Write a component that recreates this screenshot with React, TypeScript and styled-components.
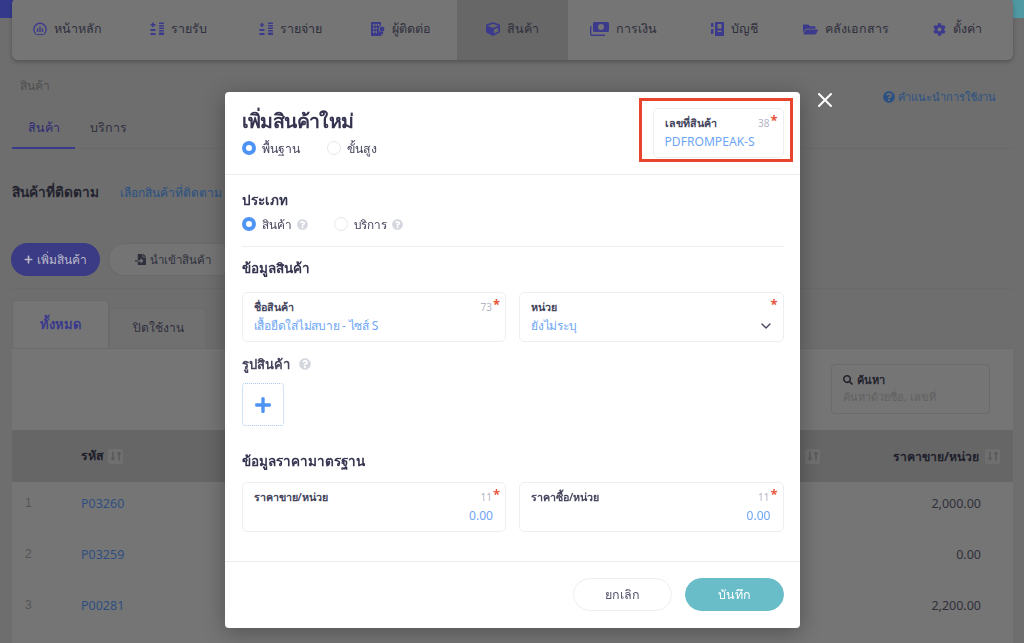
import * as React from "react";
import styled, { createGlobalStyle } from "styled-components";
import {
    FaCube,
    FaFolderOpen,
    FaCog,
    FaQuestionCircle,
    FaSearch,
    FaFileImport,
    FaPlus,
    FaLongArrowAltDown,
    FaLongArrowAltUp,
} from "react-icons/fa";
import { FiChevronDown, FiX } from "react-icons/fi";

const GlobalStyle = createGlobalStyle`
    html, body {
        margin: 0;
        padding: 0;
        height: 100%;
        overflow: hidden;
        font-family: "Noto Sans", "Inter", "Noto Sans CJK SC", sans-serif;
    }
    * {
        box-sizing: border-box;
    }
`;

const Page = styled.div`
    height: 643px;
    overflow: hidden;
    color: #26263a;
    background:
        linear-gradient(90deg, #34398c, #4f9aa3) top / 100% 18px no-repeat,
        #6e6e6e;
`;
const Nav = styled.div`
    display: grid;
    grid-template-columns: repeat(9, 1fr);
    height: 62px;
    margin: -2px 11px 0 12px;
    border-radius: 6px;
    background: #757575;
    box-shadow: 0 2px 4px rgba(0, 0, 0, 0.25);
    overflow: hidden;
`;
const NavItem = styled.div<{ $active?: boolean }>`
    display: flex;
    align-items: center;
    justify-content: center;
    gap: 7px;
    font-size: 12.5px;
    color: #2f2f3d;
    background: ${p => (p.$active ? "#676767" : "transparent")};
    svg {
        color: #3b3a8c;
        flex: none;
    }
`;
const Content = styled.div`
    padding: 0 11px 0 12px;
`;
const TopRow = styled.div`
    display: flex;
    justify-content: space-between;
    padding: 17px 17px 0 8px;
`;
const Breadcrumb = styled.div`
    font-size: 12px;
    line-height: 18px;
    color: #4e4e4e;
`;
const HelpLink = styled.div`
    display: flex;
    align-items: center;
    gap: 3px;
    margin-top: 11px;
    font-size: 11px;
    line-height: 18px;
    color: #2a5183;
`;
const PageTabs = styled.div`
    display: flex;
    margin-top: 3px;
    height: 40px;
    border-bottom: 1px solid #696969;
`;
const PageTab = styled.div<{ $active?: boolean }>`
    width: 63px;
    height: 40px;
    text-align: center;
    font-size: 12.5px;
    line-height: 38px;
    padding-left: ${p => (p.$active ? "0" : "4px")};
    color: ${p => (p.$active ? "#2e2c72" : "#2f2f3d")};
    border-bottom: ${p => (p.$active ? "2px solid #3b3a8c" : "none")};
`;
const FollowRow = styled.div`
    display: flex;
    align-items: baseline;
    gap: 21px;
    margin-top: 32px;
`;
const FollowTitle = styled.div`
    font-size: 13.7px;
    font-weight: 700;
    line-height: 22px;
    color: #23232f;
`;
const FollowLink = styled.div`
    font-size: 12px;
    line-height: 22px;
    color: #2a5183;
`;
const Actions = styled.div`
    display: flex;
    gap: 8px;
    margin: 39px 0 0 -1px;
    padding-bottom: 12px;
    border-bottom: 1px solid #6a6a6a;
`;
const AddButton = styled.div`
    display: flex;
    align-items: center;
    justify-content: center;
    gap: 4px;
    width: 89px;
    height: 33px;
    border-radius: 17px;
    font-size: 12px;
    color: #b9b9c9;
    background: #3b3a85;
`;
const ImportButton = styled(AddButton)`
    width: 130px;
    font-size: 11.5px;
    color: #2f2f3d;
    background: #747474;
    border: 1px solid #6a6a6a;
`;
const CardTabs = styled.div`
    display: flex;
    align-items: flex-end;
    margin-top: 11px;
`;
const CardTab = styled.div<{ $active?: boolean }>`
    width: ${p => (p.$active ? "97px" : "98px")};
    height: ${p => (p.$active ? "48px" : "40px")};
    border-radius: 4px 4px 0 0;
    text-align: center;
    font-size: ${p => (p.$active ? "13px" : "12px")};
    font-weight: ${p => (p.$active ? 700 : 400)};
    line-height: ${p => (p.$active ? "46px" : "38px")};
    color: ${p => (p.$active ? "#3b3a8c" : "#2f2f3d")};
    background: ${p => (p.$active ? "#757575" : "#707070")};
    border: 1px solid #6a6a6a;
    border-bottom: none;
`;
const Card = styled.div`
    background: #757575;
    border-top: 1px solid #6a6a6a;
    height: 320px;
`;
const SearchRow = styled.div`
    display: flex;
    justify-content: flex-end;
    padding: 15px 23px 16px 0;
`;
const SearchBox = styled.div`
    width: 159px;
    height: 50px;
    padding: 6px 11px;
    border: 1px solid #6b6b6b;
    border-radius: 4px;
`;
const SearchLabel = styled.div`
    display: flex;
    align-items: center;
    gap: 4px;
    font-size: 11px;
    line-height: 17px;
    font-weight: 600;
    color: #23232f;
`;
const SearchHint = styled.div`
    font-size: 11px;
    line-height: 17px;
    color: #616161;
`;
const TableRow = styled.div<{ $head?: boolean }>`
    display: grid;
    grid-template-columns: 69px 1fr 120px 180px;
    align-items: center;
    height: ${p => (p.$head ? "52px" : "51px")};
    padding: ${p => (p.$head ? "0 13px 0 0" : "0 13px 9px 0")};
    background: ${p => (p.$head ? "#666666" : "transparent")};
`;
const HeadCell = styled.div<{ $right?: boolean }>`
    display: flex;
    align-items: center;
    justify-content: ${p => (p.$right ? "flex-end" : "flex-start")};
    gap: ${p => (p.$right ? "6px" : "4px")};
    font-size: ${p => (p.$right ? "12.2px" : "12.5px")};
    font-weight: 700;
    color: #20202c;
`;
const SortButton = styled.span`
    display: inline-flex;
    align-items: center;
    justify-content: center;
    width: 15px;
    height: 15px;
    border-radius: 2px;
    background: #6f6f6f;
    color: #5a5a5a;
    svg {
        margin: 0 -2px;
    }
`;
const RowIndex = styled.div`
    padding-left: 13px;
    font-family: "Liberation Sans", sans-serif;
    font-size: 12px;
    color: #555555;
`;
const RowCode = styled.div`
    font-size: 12.5px;
    color: #2d4f80;
`;
const RowPrice = styled.div`
    grid-column: 4;
    padding-right: 19px;
    text-align: right;
    font-size: 12.5px;
    color: #30303a;
`;

const Backdrop = styled.div`
    position: fixed;
    inset: 0;
    display: flex;
    justify-content: center;
    align-items: flex-start;
    padding-top: 92px;
`;
const Modal = styled.div`
    position: relative;
    width: 575px;
    height: 536px;
    border-radius: 4px;
    background: #ffffff;
    box-shadow: 0 4px 22px rgba(0, 0, 0, 0.3);
`;
const CloseButton = styled.div`
    position: absolute;
    top: -4px;
    right: -37px;
    color: #ffffff;
    line-height: 0;
`;
const Highlight = styled.div`
    position: absolute;
    top: 6px;
    right: 7px;
    width: 154px;
    height: 64px;
    border: 3px solid #e8452c;
    pointer-events: none;
`;
const ModalHead = styled.div`
    display: flex;
    justify-content: space-between;
    height: 83px;
    padding: 16px 16px 0 17px;
    border-bottom: 1px solid #e9ebf0;
`;
const ModalTitle = styled.div`
    font-size: 19.5px;
    font-weight: 600;
    letter-spacing: -0.6px;
    line-height: 26px;
    margin-bottom: 4px;
    color: #343450;
`;
const RadioRow = styled.div<{ $gap: number; $size: number }>`
    display: flex;
    align-items: center;
    gap: ${p => p.$gap}px;
    height: 20px;
    margin-top: 3px;
    font-size: ${p => p.$size}px;
`;
const RadioLabel = styled.label`
    display: flex;
    align-items: center;
    gap: 6px;
    color: #44445c;
`;
const RadioMark = styled.span<{ $on?: boolean }>`
    width: 14px;
    height: 14px;
    border-radius: 50%;
    background: #ffffff;
    border: ${p => (p.$on ? "4px solid #4d94f5" : "1px solid #e6e8ee")};
`;
const Hint = styled(FaQuestionCircle)`
    color: #d5d7de;
    margin-left: -1px;
`;
const ModalBody = styled.div`
    padding: 14px 16px 0 17px;
    height: 387px;
    border-bottom: 1px solid #e9ebf0;
`;
const GroupTitle = styled.div`
    font-size: 13.5px;
    font-weight: 600;
    line-height: 22px;
    color: #343450;
`;
const GroupDivider = styled.div`
    height: 1px;
    margin: 12px 0 10px;
    background: #eceef2;
`;
const FieldGrid = styled.div<{ $top: number }>`
    display: grid;
    grid-template-columns: 1fr 1fr;
    gap: 13px;
    margin-top: ${p => p.$top}px;
`;
const FieldBox = styled.div<{ $wide?: string }>`
    position: relative;
    width: ${p => p.$wide ?? "auto"};
    height: 50px;
    padding: 6px 12px 0 11px;
    border: 1px solid #eceef4;
    border-radius: 5px;
    background: #ffffff;
`;
const FieldTop = styled.div`
    display: flex;
    justify-content: space-between;
    padding-right: 1px;
    font-size: 10.7px;
    line-height: 16px;
`;
const FieldLabel = styled.span`
    font-weight: 600;
    color: #44445c;
`;
const FieldCount = styled.span`
    font-size: 10px;
    color: #b4b6c4;
`;
const FieldStar = styled.span`
    position: absolute;
    top: 4px;
    right: 5px;
    font-size: 13px;
    font-weight: 700;
    line-height: 14px;
    color: #e8563c;
`;
const FieldValue = styled.div<{ $right?: boolean; $latin?: boolean }>`
    display: flex;
    justify-content: ${p => (p.$right ? "flex-end" : "space-between")};
    align-items: center;
    font-size: ${p => (p.$latin || p.$right ? "12.1px" : "12px")};
    letter-spacing: ${p => (p.$latin || p.$right ? "0" : "-0.25px")};
    line-height: 22px;
    color: #6da6f5;
`;
const Caret = styled(FiChevronDown)`
    color: #44445c;
    margin-right: -3px;
`;
const PictureTitle = styled.div`
    display: flex;
    align-items: center;
    gap: 10px;
    margin-top: 11px;
    font-size: 13px;
    font-weight: 600;
    line-height: 22px;
    color: #44445c;
`;
const UploadBox = styled.div`
    display: flex;
    align-items: center;
    justify-content: center;
    width: 42px;
    height: 43px;
    margin-top: 8px;
    margin-bottom: 24px;
    border: 1px dotted #a9c6f3;
    border-radius: 3px;
    color: #4d94f5;
`;
const ModalFoot = styled.div`
    display: flex;
    justify-content: flex-end;
    gap: 13px;
    padding: 16px 16px 0 0;
`;
const CancelButton = styled.div`
    width: 99px;
    height: 33px;
    border: 1px solid #eceef4;
    border-radius: 17px;
    text-align: center;
    font-size: 12.5px;
    line-height: 31px;
    color: #55556e;
`;
const SaveButton = styled(CancelButton)`
    border-color: #69bdc9;
    color: #ffffff;
    background: #69bdc9;
`;

const HomeIcon = () => (
    <svg width="14" height="14" viewBox="0 0 14 14" fill="none" stroke="currentColor">
        <path d="M3 12.2A6.2 6.2 0 1 1 11 12.2" strokeWidth="1.3" />
        <path d="M4.6 6.5v3.5M7 4.5v5.5M9.4 6.5v3.5" strokeWidth="1.4" />
        <path d="M3.5 12.6h7" strokeWidth="1" />
    </svg>
);
const StackIcon = ({ up }: { up?: boolean }) => (
    <svg width="14" height="14" viewBox="0 0 14 14" fill="currentColor">
        {up ? <path d="M3 0.5L5.5 3.4H3.8V5H2.2V3.4H0.5z" /> : <path d="M2.2 0.5h1.6v1.6h1.7v1.5H3.8v1.5H2.2V3.6H.5V2.1h1.7z" />}
        <rect x="0.5" y="7" width="5" height="2" rx="0.5" />
        <rect x="0.5" y="11" width="5" height="2" rx="0.5" />
        <rect x="9" y="0.5" width="5" height="1.5" rx="0.6" />
        <rect x="9" y="3" width="5" height="1.5" rx="0.6" />
        <rect x="9" y="5.5" width="5" height="1.5" rx="0.6" />
        <rect x="9" y="8" width="5" height="1.5" rx="0.6" />
        <rect x="9" y="10.5" width="5" height="2.5" rx="0.6" />
    </svg>
);
const ContactIcon = () => (
    <svg width="14" height="14" viewBox="0 0 14 14" fill="currentColor">
        <path fillRule="evenodd" d="M0 0h10v14H0zM2 2v2h1.5V2zM4.5 2v2H6V2zM7 2v2h1.5V2zM2 5.5v2h1.5v-2zM4.5 5.5v2H6v-2zM2 9v2h1.5V9zM4.5 9v2H6V9z" />
        <circle cx="11" cy="7" r="3" stroke="#757575" />
        <path d="M9.5 9.5h3L11 14z" />
    </svg>
);
const LedgerIcon = () => (
    <svg width="13" height="14" viewBox="0 0 13 14" fill="currentColor">
        <rect x="0" y="1" width="2.4" height="4" rx="0.6" />
        <rect x="0" y="7" width="2.4" height="5" rx="0.6" />
        <path fillRule="evenodd" d="M4 0h9v14H4zM6.5 2v4.5h4V2zM6.5 8.5v1.5h4V8.5z" />
    </svg>
);
const MoneyIcon = () => (
    <svg width="19" height="14" viewBox="0 0 19 14" fill="currentColor">
        <path d="M0.7 4v8.3a1 1 0 0 0 1 1H15" fill="none" stroke="currentColor" strokeWidth="1.4" />
        <path fillRule="evenodd" d="M4.5 0h13a1.5 1.5 0 0 1 1.5 1.5v7a1.5 1.5 0 0 1-1.5 1.5h-13A1.5 1.5 0 0 1 3 8.5v-7A1.5 1.5 0 0 1 4.5 0zM11 2a3 3 0 1 0 0 6 3 3 0 0 0 0-6z" />
    </svg>
);
const Sort = () => (
    <SortButton>
        <FaLongArrowAltDown size={10} />
        <FaLongArrowAltUp size={10} />
    </SortButton>
);

interface FieldProps {
    label: string;
    value?: string;
    count?: number;
    right?: boolean;
    latin?: boolean;
    select?: boolean;
    wide?: string;
}
const Field = (props: FieldProps) => (
    <FieldBox $wide={props.wide}>
        <FieldTop>
            <FieldLabel>{props.label}</FieldLabel>
            {props.count !== undefined && <FieldCount>{props.count}</FieldCount>}
        </FieldTop>
        <FieldStar>*</FieldStar>
        <FieldValue $right={props.right} $latin={props.latin}>
            {props.value}
            {props.select && <Caret size={16} />}
        </FieldValue>
    </FieldBox>
);

const navItems: { text: string; icon: React.ReactNode }[] = [
    { text: "หน้าหลัก", icon: <HomeIcon /> },
    { text: "รายรับ", icon: <StackIcon /> },
    { text: "รายจ่าย", icon: <StackIcon up /> },
    { text: "ผู้ติดต่อ", icon: <ContactIcon /> },
    { text: "สินค้า", icon: <FaCube size={14} /> },
    { text: "การเงิน", icon: <MoneyIcon /> },
    { text: "บัญชี", icon: <LedgerIcon /> },
    { text: "คลังเอกสาร", icon: <FaFolderOpen size={15} /> },
    { text: "ตั้งค่า", icon: <FaCog size={13} /> },
];
const rows = [
    { code: "P03260", price: "2,000.00" },
    { code: "P03259", price: "0.00" },
    { code: "P00281", price: "2,200.00" },
];

const App = () => {
    return (
        <Page>
            <GlobalStyle />
            <Nav>
                {navItems.map((item, i) => (
                    <NavItem key={item.text} $active={i === 4}>
                        {item.icon}
                        {item.text}
                    </NavItem>
                ))}
            </Nav>
            <Content>
                <TopRow>
                    <Breadcrumb>สินค้า</Breadcrumb>
                    <HelpLink>
                        <FaQuestionCircle size={12} />
                        คำแนะนำการใช้งาน
                    </HelpLink>
                </TopRow>
                <PageTabs>
                    <PageTab $active>สินค้า</PageTab>
                    <PageTab>บริการ</PageTab>
                </PageTabs>
                <FollowRow>
                    <FollowTitle>สินค้าที่ติดตาม</FollowTitle>
                    <FollowLink>เลือกสินค้าที่ติดตาม</FollowLink>
                </FollowRow>
                <Actions>
                    <AddButton>
                        <FaPlus size={9} />
                        เพิ่มสินค้า
                    </AddButton>
                    <ImportButton>
                        <FaFileImport size={11} />
                        นำเข้าสินค้า
                    </ImportButton>
                </Actions>
                <CardTabs>
                    <CardTab $active>ทั้งหมด</CardTab>
                    <CardTab>ปิดใช้งาน</CardTab>
                </CardTabs>
                <Card>
                    <SearchRow>
                        <SearchBox>
                            <SearchLabel>
                                <FaSearch size={10} />
                                ค้นหา
                            </SearchLabel>
                            <SearchHint>ค้นหาด้วยชื่อ, เลขที่</SearchHint>
                        </SearchBox>
                    </SearchRow>
                    <TableRow $head>
                        <span />
                        <HeadCell>
                            รหัส
                            <Sort />
                        </HeadCell>
                        <HeadCell $right>
                            <Sort />
                        </HeadCell>
                        <HeadCell $right>
                            ราคาขาย/หน่วย
                            <Sort />
                        </HeadCell>
                    </TableRow>
                    {rows.map((row, i) => (
                        <TableRow key={row.code}>
                            <RowIndex>{i + 1}</RowIndex>
                            <RowCode>{row.code}</RowCode>
                            <RowPrice>{row.price}</RowPrice>
                        </TableRow>
                    ))}
                </Card>
            </Content>
            <Backdrop>
                <Modal>
                    <CloseButton>
                        <FiX size={24} strokeWidth={2} />
                    </CloseButton>
                    <ModalHead>
                        <div>
                            <ModalTitle>เพิ่มสินค้าใหม่</ModalTitle>
                            <RadioRow $gap={27} $size={12.3}>
                                <RadioLabel>
                                    <RadioMark $on />
                                    พื้นฐาน
                                </RadioLabel>
                                <RadioLabel>
                                    <RadioMark />
                                    ขั้นสูง
                                </RadioLabel>
                            </RadioRow>
                        </div>
                        <Field label="เลขที่สินค้า" count={38} value="PDFROMPEAK-S" wide="131px" latin />
                    </ModalHead>
                    <ModalBody>
                        <GroupTitle>ประเภท</GroupTitle>
                        <RadioRow $gap={26} $size={11.8}>
                            <RadioLabel>
                                <RadioMark $on />
                                <span>สินค้า</span>
                                <Hint size={11} />
                            </RadioLabel>
                            <RadioLabel>
                                <RadioMark />
                                <span>บริการ</span>
                                <Hint size={11} />
                            </RadioLabel>
                        </RadioRow>
                        <GroupDivider />
                        <GroupTitle>ข้อมูลสินค้า</GroupTitle>
                        <FieldGrid $top={13}>
                            <Field label="ชื่อสินค้า" count={73} value="เสื้อยืดใส่ไม่สบาย - ไซส์ S" />
                            <Field label="หน่วย" value="ยังไม่ระบุ" select />
                        </FieldGrid>
                        <PictureTitle>
                            รูปสินค้า
                            <Hint size={12} />
                        </PictureTitle>
                        <UploadBox>
                            <FaPlus size={18} />
                        </UploadBox>
                        <GroupTitle>ข้อมูลราคามาตรฐาน</GroupTitle>
                        <FieldGrid $top={10}>
                            <Field label="ราคาขาย/หน่วย" count={11} value="0.00" right />
                            <Field label="ราคาซื้อ/หน่วย" count={11} value="0.00" right />
                        </FieldGrid>
                    </ModalBody>
                    <ModalFoot>
                        <CancelButton>ยกเลิก</CancelButton>
                        <SaveButton>บันทึก</SaveButton>
                    </ModalFoot>
                    <Highlight />
                </Modal>
            </Backdrop>
        </Page>
    );
};
export default App;
